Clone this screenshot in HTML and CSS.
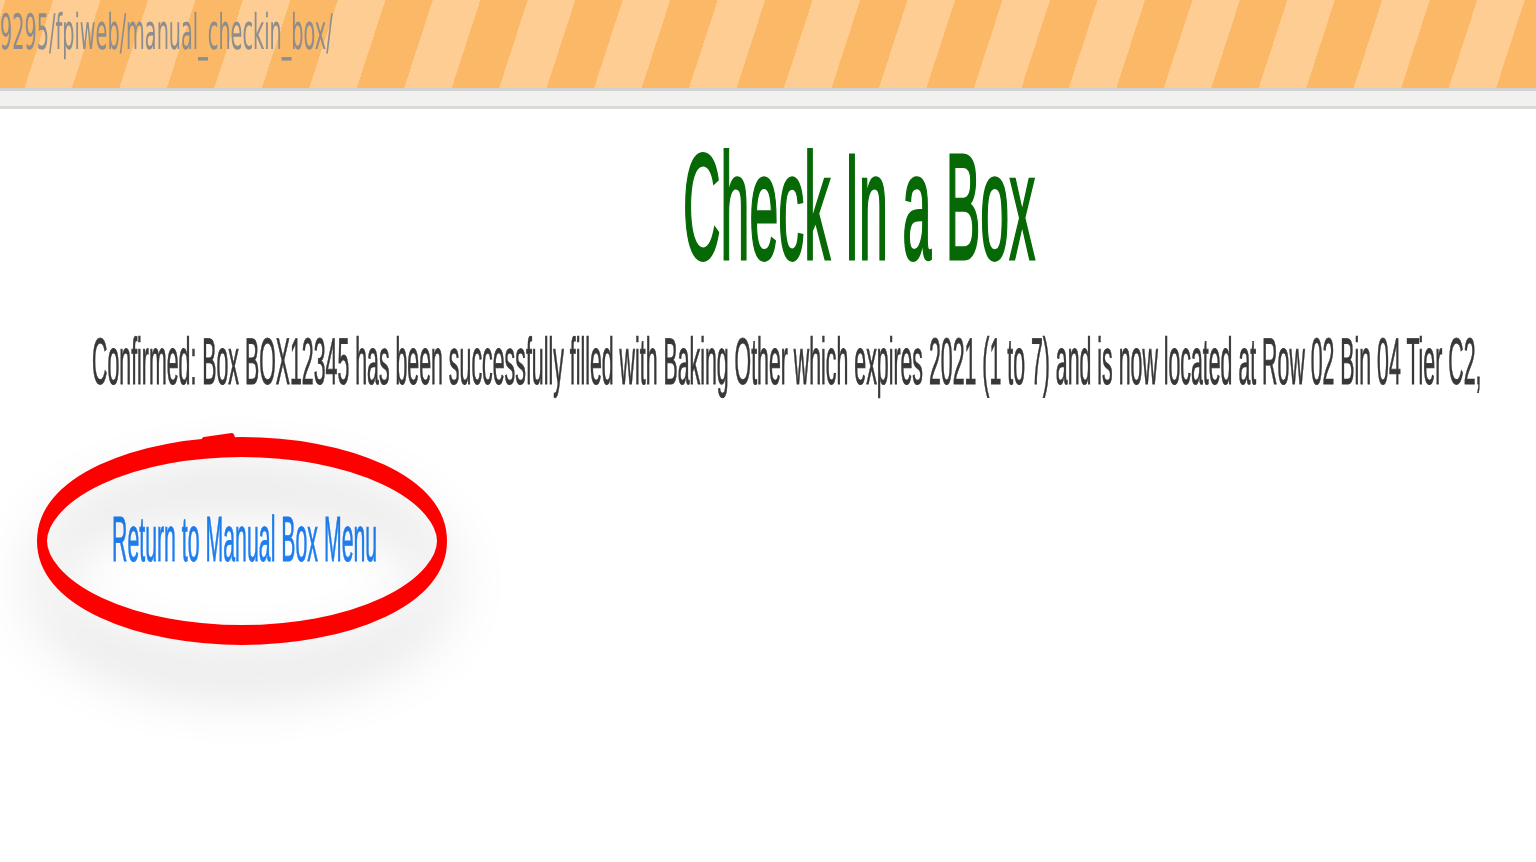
FILE: index.html
```html
<!DOCTYPE html>
<html lang="en">
<head>
<meta charset="utf-8">
<title>Check In a Box</title>
<link rel="stylesheet" href="styles.css">
</head>
<body>
  <header class="urlbar">
    <span class="stretch url">9295/fpiweb/manual_checkin_box/</span>
  </header>
  <div class="toolbar"></div>
  <main class="content">
    <h1 class="title"><span class="stretch">Check In a Box</span></h1>
    <p class="message"><span class="stretch">Confirmed: Box BOX12345 has been successfully filled with Baking Other which expires 2021 (1 to 7) and is now located at Row 02 Bin 04 Tier C2,</span></p>
    <div class="back">
      <a class="back-link" href="#"><span class="stretch">Return to Manual Box Menu</span></a>
      <svg class="annotation" viewBox="0 0 420 108" preserveAspectRatio="none" aria-hidden="true">
        <ellipse cx="210" cy="54" rx="200" ry="47" fill="none" stroke="#ff0000" stroke-width="10"/>
        <path d="M172 5 L200 3" stroke="#ff0000" stroke-width="6" stroke-linecap="round" fill="none"/>
      </svg>
    </div>
  </main>
</body>
</html>
```

FILE: styles.css
```css
html, body {
  margin: 0;
  padding: 0;
  background: #ffffff;
  overflow: hidden;
}

body {
  width: 1536px;
  height: 862px;
  font-family: "Liberation Sans", Arial, sans-serif;
  text-rendering: geometricPrecision;
}

.stretch {
  display: inline-block;
  vertical-align: top;
  white-space: nowrap;
  transform-origin: 0 0;
}

.urlbar {
  height: 88px;
  background: repeating-linear-gradient(108deg,
    #fdcd93 0 5.3px,
    #fbb866 5.3px 50.4px,
    #fdcd93 50.4px 90.3px);
  white-space: nowrap;
  font-family: "DejaVu Sans", sans-serif;
  font-size: 19.26px;
  line-height: 19.26px;
}

.url {
  color: #8d8d8d;
  margin-top: 8px;
  transform: scaleY(2.544);
}

.toolbar {
  height: 15px;
  background: #f1f1f0;
  border-top: 3px solid #d2d2d2;
  border-bottom: 3px solid #dadada;
}

.content {
  padding-top: 21px;
}

.title {
  margin: 0;
  padding-left: 683px;
  height: 151px;
  font-size: 51.94px;
  line-height: 51.94px;
  font-weight: normal;
  color: #066906;
}

.title .stretch {
  margin-top: 7px;
  transform: scaleY(2.907);
  -webkit-text-stroke: 1.03px #066906;
}

.message {
  margin: 47px 0 0;
  padding-left: 92px;
  height: 66px;
  font-size: 21.34px;
  line-height: 21.34px;
  color: #383838;
}

.message .stretch {
  margin-top: 3px;
  transform: scaleY(3.093);
  -webkit-text-stroke: 0.29px #383838;
}

.back {
  position: relative;
  margin-top: 112px;
  padding-left: 112px;
  height: 64px;
  font-size: 21.31px;
  line-height: 21.31px;
}

.back-link {
  color: #1f7ff2;
  text-decoration: none;
}

.back-link .stretch {
  margin-top: 4px;
  transform: scaleY(3.003);
  -webkit-text-stroke: 0.27px #1f7ff2;
}

.annotation {
  position: absolute;
  left: 32px;
  top: -73px;
  width: 420px;
  height: 216px;
  overflow: visible;
  filter: drop-shadow(0 40px 28px rgba(0, 0, 0, 0.22));
}
```
